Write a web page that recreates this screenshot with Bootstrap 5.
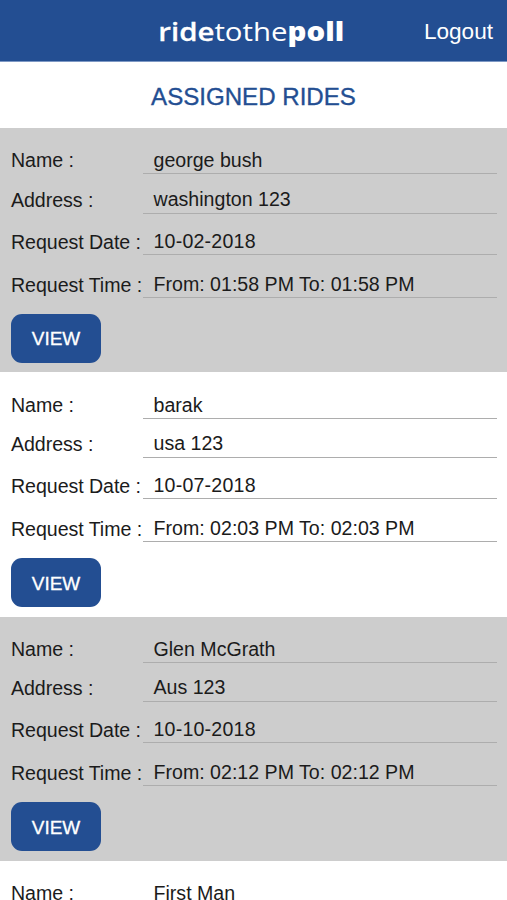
<!DOCTYPE html>
<html lang="en">
<head>
<meta charset="utf-8">
<meta name="viewport" content="width=device-width, initial-scale=1">
<title>Assigned Rides</title>
<link rel="stylesheet" href="https://cdn.jsdelivr.net/npm/bootstrap@5.3.0/dist/css/bootstrap.min.css">
<style>
:root { --ride-blue: #234e92; }
body { font-family: "Liberation Sans", Arial, sans-serif; font-size: 19.6px; color: #1b1b1b; height: 900px; overflow: hidden; }
.topbar { height: 62px; background: var(--ride-blue); border-bottom: 1px solid #7d98c4; }
.brand { font: 400 26px/1 "Open Sans", "Noto Sans", sans-serif; grid-column: 2; margin-right: 4px; transform: scaleX(1.13); }
.brand-ride { font-weight: 600; -webkit-text-stroke: .3px #fff; }
.brand-poll { font-weight: 800; }
.bar-grid { display: grid; grid-template-columns: 1fr auto 1fr; }
.logout { font-size: 22.6px; padding-right: 14px; padding-top: 2px; }
.page-title { height: 66px; font-size: 24.1px; color: var(--ride-blue); -webkit-text-stroke: .35px var(--ride-blue); padding-top: 4px; }
.ride { height: 244.4px; padding: 0 10px 0 11px; }
.ride:last-child { height: auto; }
.ride:nth-child(odd) { background: #cdcdcd; }
.field { height: 41px; line-height: 26px; white-space: nowrap; }
.field-name { height: 46.3px; }
.field-address { height: 39.4px; line-height: 27px; }
.field-time { height: 43px; }
.field-label { width: 132px; flex: none; letter-spacing: -.05px; }
.field-name .field-label { padding-bottom: 1px; }
.field-value { padding-left: 10.5px; border-bottom: 1px solid #adadad; }
.field-date .field-value { letter-spacing: .2px; }
.btn-view { width: 90px; height: 49px; margin-top: 16px; border-radius: 11px; background: var(--ride-blue); font-size: 19px; line-height: 1; -webkit-text-stroke: .3px #fff; }
.btn-view span { display: inline-block; padding-top: 1px; }
</style>
<script src="https://cdn.jsdelivr.net/npm/bootstrap@5.3.0/dist/js/bootstrap.bundle.min.js"></script>
</head>
<body>
<header class="topbar bar-grid align-items-center text-white">
  <div class="brand"><span class="brand-ride">ride</span><span>tothe</span><span class="brand-poll">poll</span></div>
  <a href="#" class="logout text-white text-decoration-none text-end">Logout</a>
</header>
<h1 class="page-title d-flex align-items-center justify-content-center m-0 fw-normal">ASSIGNED RIDES</h1>
<main>
  <section class="ride">
    <div class="field field-name d-flex align-items-end"><span class="field-label">Name :</span><span class="field-value flex-grow-1">george bush</span></div>
    <div class="field field-address d-flex align-items-end"><span class="field-label">Address :</span><span class="field-value flex-grow-1">washington 123</span></div>
    <div class="field field-date d-flex align-items-end"><span class="field-label">Request Date :</span><span class="field-value flex-grow-1">10-02-2018</span></div>
    <div class="field field-time d-flex align-items-end"><span class="field-label">Request Time :</span><span class="field-value flex-grow-1">From: 01:58 PM To: 01:58 PM</span></div>
    <button type="button" class="btn btn-view text-white p-0 border-0 d-block"><span>VIEW</span></button>
  </section>
  <section class="ride">
    <div class="field field-name d-flex align-items-end"><span class="field-label">Name :</span><span class="field-value flex-grow-1">barak</span></div>
    <div class="field field-address d-flex align-items-end"><span class="field-label">Address :</span><span class="field-value flex-grow-1">usa 123</span></div>
    <div class="field field-date d-flex align-items-end"><span class="field-label">Request Date :</span><span class="field-value flex-grow-1">10-07-2018</span></div>
    <div class="field field-time d-flex align-items-end"><span class="field-label">Request Time :</span><span class="field-value flex-grow-1">From: 02:03 PM To: 02:03 PM</span></div>
    <button type="button" class="btn btn-view text-white p-0 border-0 d-block"><span>VIEW</span></button>
  </section>
  <section class="ride">
    <div class="field field-name d-flex align-items-end"><span class="field-label">Name :</span><span class="field-value flex-grow-1">Glen McGrath</span></div>
    <div class="field field-address d-flex align-items-end"><span class="field-label">Address :</span><span class="field-value flex-grow-1">Aus 123</span></div>
    <div class="field field-date d-flex align-items-end"><span class="field-label">Request Date :</span><span class="field-value flex-grow-1">10-10-2018</span></div>
    <div class="field field-time d-flex align-items-end"><span class="field-label">Request Time :</span><span class="field-value flex-grow-1">From: 02:12 PM To: 02:12 PM</span></div>
    <button type="button" class="btn btn-view text-white p-0 border-0 d-block"><span>VIEW</span></button>
  </section>
  <section class="ride">
    <div class="field field-name d-flex align-items-end"><span class="field-label">Name :</span><span class="field-value flex-grow-1">First Man</span></div>
  </section>
</main>
</body>
</html>
